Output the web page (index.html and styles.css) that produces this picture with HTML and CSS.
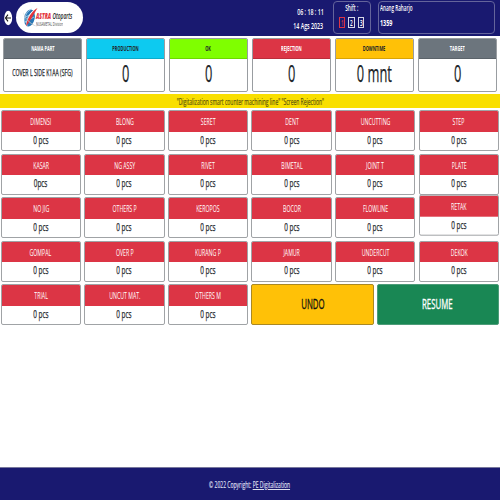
FILE: index.html
```html
<!DOCTYPE html>
<html lang="id">
<head>
<meta charset="utf-8">
<title>Screen Rejection</title>
<link rel="stylesheet" href="styles.css">
</head>
<body>
<header class="top">
  <svg class="back" viewBox="0 0 10 16" preserveAspectRatio="none"><ellipse cx="4.2" cy="8" rx="4" ry="7.2" fill="#fff"/><path d="M7 8H1.600M4 4.600L1.500 8l2.500 3.400" fill="none" stroke="#111" stroke-width="1.100"/></svg>
  <div class="logo">
    <svg class="mark" viewBox="0 0 17 22"><ellipse cx="7.5" cy="11" rx="5.2" ry="8.6" fill="#2877b6" transform="rotate(12 7.5 11)"/><path d="M3 16C2 9 5 4 10 2M5 19C4 12 7 6 12 4M2 11l9-5M3 15l9-5" stroke="#b9dcf2" stroke-width=".8" fill="none"/><path d="M15.5 1C9 3 5 10 4 19c2-6 5-12 11.500-18z" fill="#fff"/><path d="M15.500 1C10 4 5 11 4 19.500c4-5 7-11 11.500-18.500z" fill="#e3343c"/><path d="M1 5c3 7 8 12 15 15C9 18 3 13 1 5z" fill="#a9b3bd"/></svg>
    <div class="brand">
      <div class="brand-name"><span class="t"><b>ASTRA</b> Otoparts</span></div>
      <div class="brand-sub"><span class="t">NUSAMETAL Division</span></div>
    </div>
  </div>
  <div class="clock"><div><span class="t">06 : 18 : 11</span></div><div><span class="t">14 Ags 2023</span></div></div>
  <div class="shift"><div class="shift-label"><span class="t">Shift :</span></div><div class="shifts"><i class="on"><span class="t">1</span></i><i><span class="t">2</span></i><i><span class="t">3</span></i></div></div>
  <div class="user"><div><span class="t">Anang Raharjo</span></div><div><span class="t">1359</span></div></div>
</header>
<section class="stats">
  <div class="stat gray"><h2><span class="t">NAMA PART</span></h2><p class="part"><span class="t">COVER L SIDE K1AA (SFG)</span></p></div>
  <div class="stat cyan"><h2><span class="t">PRODUCTION</span></h2><p><span class="t">0</span></p></div>
  <div class="stat lime"><h2><span class="t">OK</span></h2><p><span class="t">0</span></p></div>
  <div class="stat red"><h2><span class="t">REJECTION</span></h2><p><span class="t">0</span></p></div>
  <div class="stat amber"><h2><span class="t">DOWNTIME</span></h2><p><span class="t">0 mnt</span></p></div>
  <div class="stat gray"><h2><span class="t">TARGET</span></h2><p><span class="t">0</span></p></div>
</section>
<div class="banner"><span class="t">"Digitalization smart counter machining line" "Screen Rejection"</span></div>
<main class="grid">
  <div class="card"><h3><span class="t">DIMENSI</span></h3><p><span class="t">0 pcs</span></p></div>
  <div class="card"><h3><span class="t">BLONG</span></h3><p><span class="t">0 pcs</span></p></div>
  <div class="card"><h3><span class="t">SERET</span></h3><p><span class="t">0 pcs</span></p></div>
  <div class="card"><h3><span class="t">DENT</span></h3><p><span class="t">0 pcs</span></p></div>
  <div class="card"><h3><span class="t">UNCUTTING</span></h3><p><span class="t">0 pcs</span></p></div>
  <div class="card"><h3><span class="t">STEP</span></h3><p><span class="t">0 pcs</span></p></div>
  <div class="card"><h3><span class="t">KASAR</span></h3><p><span class="t">0pcs</span></p></div>
  <div class="card"><h3><span class="t">NG ASSY</span></h3><p><span class="t">0 pcs</span></p></div>
  <div class="card"><h3><span class="t">RIVET</span></h3><p><span class="t">0 pcs</span></p></div>
  <div class="card"><h3><span class="t">BIMETAL</span></h3><p><span class="t">0 pcs</span></p></div>
  <div class="card"><h3><span class="t">JOINT T</span></h3><p><span class="t">0 pcs</span></p></div>
  <div class="card"><h3><span class="t">PLATE</span></h3><p><span class="t">0 pcs</span></p></div>
  <div class="card"><h3><span class="t">NO JIG</span></h3><p><span class="t">0 pcs</span></p></div>
  <div class="card"><h3><span class="t">OTHERS P</span></h3><p><span class="t">0 pcs</span></p></div>
  <div class="card"><h3><span class="t">KEROPOS</span></h3><p><span class="t">0 pcs</span></p></div>
  <div class="card"><h3><span class="t">BOCOR</span></h3><p><span class="t">0 pcs</span></p></div>
  <div class="card"><h3><span class="t">FLOWLINE</span></h3><p><span class="t">0 pcs</span></p></div>
  <div class="card raised"><h3><span class="t">RETAK</span></h3><p><span class="t">0 pcs</span></p></div>
  <div class="card"><h3><span class="t">GOMPAL</span></h3><p><span class="t">0 pcs</span></p></div>
  <div class="card"><h3><span class="t">OVER P</span></h3><p><span class="t">0 pcs</span></p></div>
  <div class="card"><h3><span class="t">KURANG P</span></h3><p><span class="t">0 pcs</span></p></div>
  <div class="card"><h3><span class="t">JAMUR</span></h3><p><span class="t">0 pcs</span></p></div>
  <div class="card"><h3><span class="t">UNDERCUT</span></h3><p><span class="t">0 pcs</span></p></div>
  <div class="card"><h3><span class="t">DEKOK</span></h3><p><span class="t">0 pcs</span></p></div>
  <div class="card"><h3><span class="t">TRIAL</span></h3><p><span class="t">0 pcs</span></p></div>
  <div class="card"><h3><span class="t">UNCUT MAT.</span></h3><p><span class="t">0 pcs</span></p></div>
  <div class="card"><h3><span class="t">OTHERS M</span></h3><p><span class="t">0 pcs</span></p></div>
  <div class="actions"><button class="undo"><span class="t">UNDO</span></button><button class="resume"><span class="t">RESUME</span></button></div>
</main>
<footer><span class="t">© 2022 Copyright: <a>PE Digitalization</a></span></footer>
</body>
</html>
```
FILE: styles.css
```css
* { box-sizing: border-box; margin: 0; padding: 0; }
body { width: 500px; height: 500px; display: flex; flex-direction: column; overflow: hidden; background: #fff; color: #212529; font-family: "Open Sans", "Noto Sans", sans-serif; }
/* Condensed lettering: each label is narrowed about its own centre. */
.t { display: inline-block; white-space: nowrap; transform: scaleX(.56); }

.top { flex: none; height: 36px; display: flex; background: #191970; color: #fff; font-weight: 600; font-size: 8.5px; }
.back { width: 10px; height: 16px; margin: 10px 0 0 4px; }
.logo { width: 67px; height: 31px; margin: 2px 0 0 2px; border-radius: 16px; background: #fff; display: flex; overflow: hidden; }
.mark { flex: none; width: 17px; height: 22px; margin: 5px 0 0 6px; }
.brand { width: 38px; padding-top: 9px; margin-left: -3px; }
.brand div { height: 8px; line-height: 10px; }
.brand .t { transform-origin: 0 50%; }
.brand-name { font-size: 8px; color: #222; font-style: italic; }
.brand-name .t { transform: scaleX(.61); }
.brand-name b { color: #e3343c; }
.brand-sub { font-size: 5.5px; color: #444; font-weight: 400; }
.brand-sub .t { transform: scaleX(.5); }
.clock { width: 160px; margin-left: 80.5px; padding-top: 5px; text-align: right; }
.clock div { height: 13.5px; line-height: 14px; }
.clock .t { transform: scaleX(.62); transform-origin: 100% 50%; }
.shift { width: 38px; height: 33px; margin: 1px 0 0 9px; border: 1px solid #64649b; border-radius: 4px; text-align: center; }
.shift-label { height: 13px; line-height: 11px; display: flex; justify-content: center; }
.shifts { display: flex; justify-content: center; gap: 3px; padding-top: 2px; }
.shifts i { width: 6.5px; height: 11px; border: 1px solid #d7d7e6; font-style: normal; display: flex; justify-content: center; align-items: center; line-height: 9px; }
.shifts .on { border-color: #dc3545; color: #dc3545; }
.user { width: 117px; height: 33px; margin: 1px 0 0 7px; border: 1px solid #64649b; border-radius: 4px; padding-left: 1px; }
.user div { height: 15px; line-height: 11px; }
.user .t { transform-origin: 0 50%; }
.user div:first-child .t { transform: scaleX(.54); }
.user div:last-child .t { transform: scaleX(.64); font-weight: 700; }

.stats { flex: none; height: 58px; padding: 2.300px 3.300px 2.300px; display: grid; grid-template-columns: repeat(6, 1fr); gap: 4px; }
.stat { border: 1px solid #999da1; border-radius: 2px; display: flex; flex-direction: column; overflow: hidden; }
.stat h2 { height: 19.500px; font-size: 7px; line-height: 19px; font-weight: 700; display: flex; justify-content: center; border-bottom: 1px solid rgba(0,0,0,.15); }
.stat p { flex: 1; display: flex; justify-content: center; align-items: center; font-size: 23px; line-height: 28px; padding-bottom: 3px; -webkit-text-stroke: .25px #212529; }
.stat p.part { font-size: 9.300px; }
.part .t { transform: scaleX(.555); }
.gray h2 { background: #6c757d; color: #fff; }
.cyan h2 { background: #0dcaf0; }
.lime h2 { background: #7fff00; }
.red h2 { background: #dc3545; color: #fff; }
.amber h2 { background: #ffc107; }

.banner { flex: none; height: 13.500px; background: #f9df00; color: #5c540f; display: flex; justify-content: center; font-size: 9.500px; line-height: 15px; -webkit-text-stroke: .2px #5c540f; }
.banner .t { transform: scaleX(.525); }

.grid { flex: 1; padding: 2.500px 1px 0 .7px; display: grid; grid-template-columns: repeat(6, 1fr); grid-auto-rows: 41px; column-gap: 3.300px; row-gap: 2.500px; }
.card { min-width: 0; border: 1px solid #a0a3a6; border-radius: 2px; background: #fff; overflow: hidden; }
.card h3 { height: 20.500px; background: #dc3545; color: #fff; font-size: 9.300px; font-weight: 400; line-height: 22px; display: flex; justify-content: center; }
.card p { height: 18.500px; font-size: 10.800px; line-height: 15px; display: flex; justify-content: center; -webkit-text-stroke: .25px #212529; }
.card p .t { transform: scaleX(.59); }
.raised { transform: translateY(-2.300px); }
.actions { grid-column: 4 / 7; display: flex; gap: 2.500px; }
.actions button { flex: 1; border: 1px solid #a98824; border-radius: 2px; font: 400 14px "Open Sans", sans-serif; display: flex; align-items: center; justify-content: center; padding-bottom: 2px; -webkit-text-stroke: .35px currentColor; }
.actions .undo { background: #ffc107; color: #111; }
.actions .resume { background: #198754; color: #fff; border-color: #4d9c79; }

footer { flex: none; height: 33px; background: #191970; color: #dedeed; display: flex; justify-content: center; align-items: center; font-size: 8.500px; border-top: 1px solid #77779c; -webkit-text-stroke: .2px #dedeed; }
footer .t { transform: scaleX(.59); }
footer a { text-decoration: underline; }
```
